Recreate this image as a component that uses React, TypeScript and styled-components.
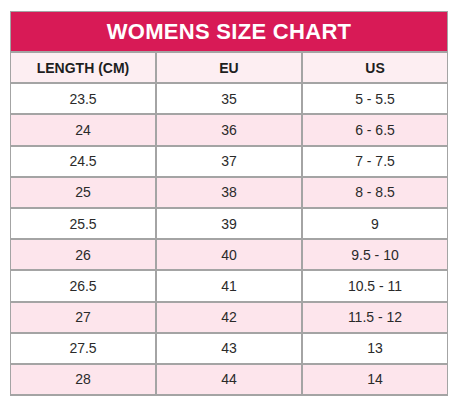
import styled, { createGlobalStyle } from "styled-components"

const GlobalStyle = createGlobalStyle`
	body {
		margin: 0;
		background: #ffffff;
		font-family: "Liberation Sans", Arial, sans-serif;
	}
`

const Page = styled.div`
	padding: 11px 12px 0 10px;
`

const Chart = styled.div`
	width: 436px;
	display: grid;
	grid-template-columns: repeat(3, 1fr);
	grid-template-rows: 39px;
	grid-auto-rows: 29.2px;
	gap: 2px;
	background: #a4a4a4;
	border: 1px solid #a4a4a4;
	border-bottom-width: 2px;
`

const Title = styled.div`
	grid-column: 1 / -1;
	display: flex;
	align-items: center;
	justify-content: center;
	background: #d81a56;
	color: #ffffff;
	font-weight: bold;
	font-size: 22px;
	letter-spacing: 0.3px;
`

const Cell = styled.div<{ $tone: "head" | "pink" | "white" }>`
	display: flex;
	align-items: center;
	justify-content: center;
	font-size: 14px;
	color: ${(p) => (p.$tone === "head" ? "#1e1e1e" : "#2a2a2a")};
	font-weight: ${(p) => (p.$tone === "head" ? "bold" : "normal")};
	background: ${(p) =>
		p.$tone === "head" ? "#fdeef2" : p.$tone === "pink" ? "#fde5ec" : "#ffffff"};
`

const sizes = [
	["23.5", "35", "5 - 5.5"],
	["24", "36", "6 - 6.5"],
	["24.5", "37", "7 - 7.5"],
	["25", "38", "8 - 8.5"],
	["25.5", "39", "9"],
	["26", "40", "9.5 - 10"],
	["26.5", "41", "10.5 - 11"],
	["27", "42", "11.5 - 12"],
	["27.5", "43", "13"],
	["28", "44", "14"],
]

export default function App() {
	return (
		<Page>
			<GlobalStyle />
			<Chart>
				<Title>WOMENS SIZE CHART</Title>
				<Cell $tone="head">LENGTH (CM)</Cell>
				<Cell $tone="head">EU</Cell>
				<Cell $tone="head">US</Cell>
				{sizes.map((row, i) =>
					row.map((value, j) => (
						<Cell key={`${i}-${j}`} $tone={i % 2 === 1 ? "pink" : "white"}>
							{value}
						</Cell>
					))
				)}
			</Chart>
		</Page>
	)
}
